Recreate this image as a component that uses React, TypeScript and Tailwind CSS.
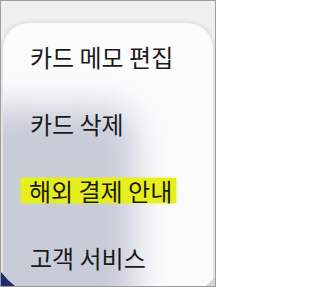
const items = [
  { label: "카드 메모 편집", highlight: false },
  { label: "카드 삭제", highlight: false },
  { label: "해외 결제 안내", highlight: true },
  { label: "고객 서비스", highlight: false },
];

const App: React.FC = () => {
  return (
    <div
      className="relative w-[216px] h-[287px] overflow-hidden border border-[#9d9d9d] bg-[#efefef] flex flex-col pt-[22px] px-[2px]"
      style={{ fontFamily: '"Noto Sans CJK KR", "Noto Sans", sans-serif' }}
    >
      {/* menu sheet */}
      <div className="relative flex-1 rounded-t-[26px] bg-[#fbfbfc] shadow-[0_0_6px_rgba(0,0,0,0.12)] overflow-hidden">
        {/* blurred backdrop showing through */}
        <div className="absolute left-[-40px] top-[84px] w-[172px] h-[240px] rounded-[30px] bg-[#c8ccd9] blur-[16px]" />

        <ul className="relative flex flex-col">
          {items.map((item) => (
            <li
              key={item.label}
              className="h-[67px] flex items-center pl-[27px] text-[24px] text-[#1a1a1a] leading-none"
            >
              {item.highlight ? (
                <span className="-ml-[9px] pl-[8px] pr-[4px] h-[25px] flex items-center bg-[#e6ee1c] shadow-[0_0_3px_#e6ee1c]">
                  {item.label}
                </span>
              ) : (
                <span>{item.label}</span>
              )}
            </li>
          ))}
        </ul>
      </div>

      {/* corner bits from the screen edge */}
      <svg className="absolute left-0 bottom-0" width="16" height="16" viewBox="0 0 16 16">
        <path d="M0 2 Q6 10 14 16 L0 16 Z" fill="#1e2a6e" />
      </svg>
      <svg className="absolute right-0 bottom-0" width="9" height="9" viewBox="0 0 9 9">
        <path d="M9 0 L9 9 L0 9 Z" fill="#d4d4d4" />
      </svg>
    </div>
  );
};

export default App;
